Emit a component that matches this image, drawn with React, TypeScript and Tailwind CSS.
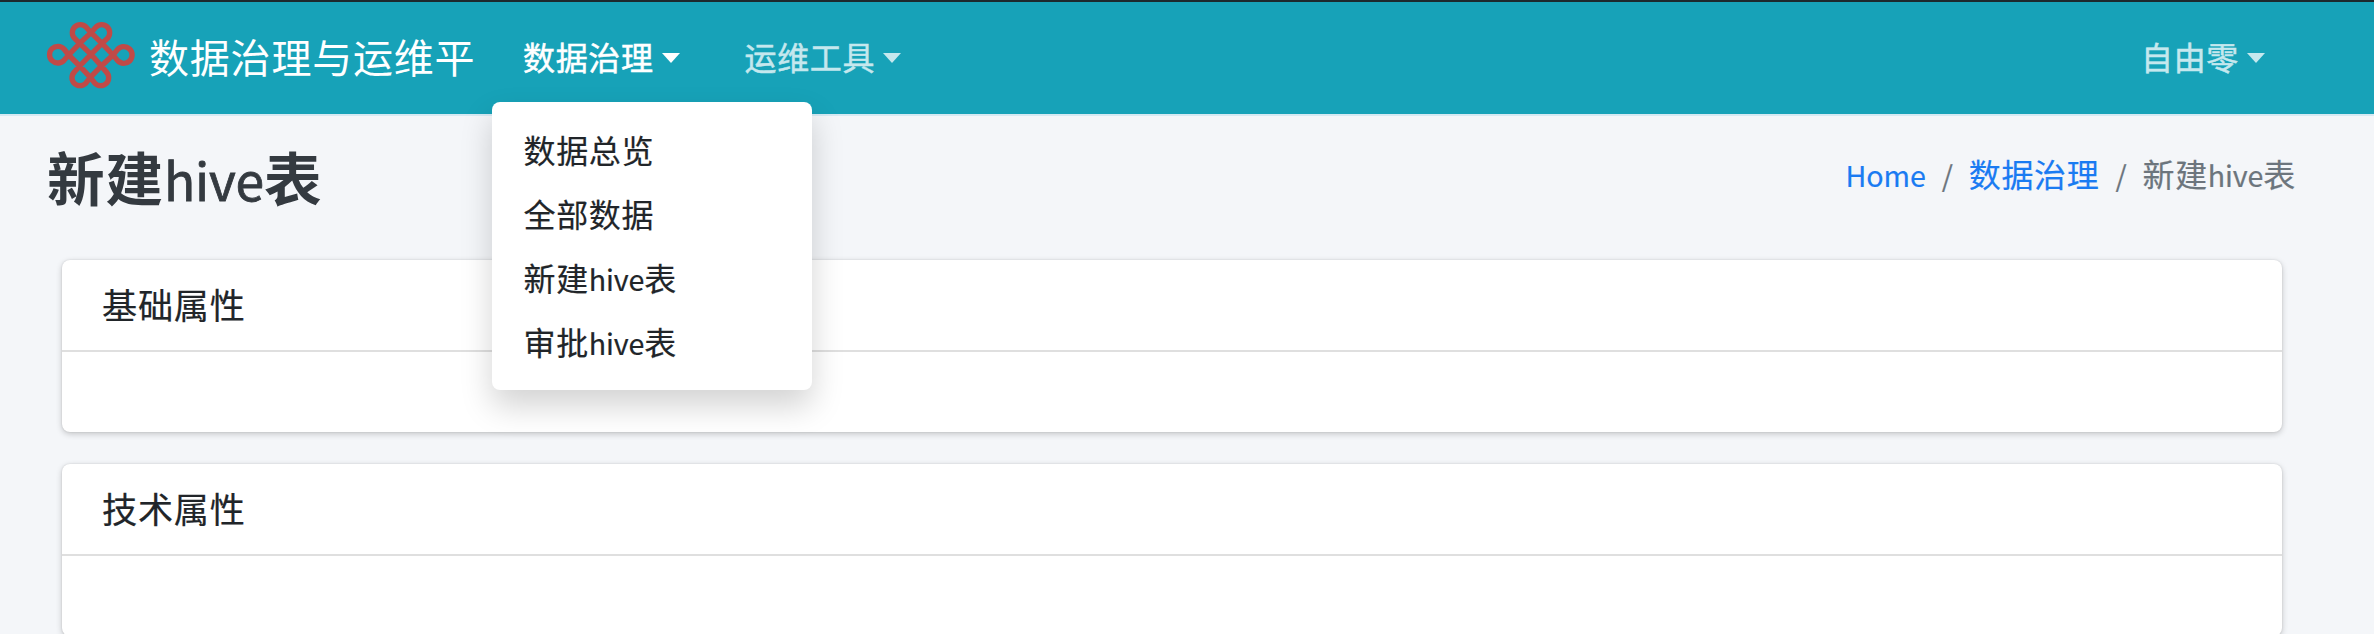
import type { ReactNode } from "react";

const font = "font-['Noto_Sans_CJK_SC',sans-serif]";

function Logo() {
  return (
    <svg
      className="mb-[6px] h-[74px] w-[96px] shrink-0"
      viewBox="40 54 288 222"
      fill="none"
      stroke="#c04a47"
      strokeWidth="16"
      strokeLinejoin="round"
    >
      <path d="M184 98L169 81A24 24 0 1 0 135 115L150 130L184 163L215 198L230 216A24 24 0 1 1 196 250L182 232L150 198L117 165L103 147A25 25 0 1 0 103 181L117 165L150 130L184 98L199 81A24 24 0 1 1 233 115L217 130L184 163L150 198L134 216A24 24 0 1 0 168 250L182 232L215 198L250 165L264 148A25 25 0 1 1 264 182L250 165L217 130Z" />
    </svg>
  );
}

function Caret() {
  return (
    <span className="ml-[8px] h-0 w-0 border-x-[9px] border-t-[10px] border-x-transparent border-t-current" />
  );
}

function Latin({ children }: { children: ReactNode }) {
  return <span className="text-[0.895em] font-normal tracking-[-0.003em]">{children}</span>;
}

function Card({ title }: { title: string }) {
  return (
    <section className="h-[172px] shrink-0 rounded-lg bg-white shadow-[0_0_2px_rgba(0,0,0,0.125),0_2px_6px_rgba(0,0,0,0.2)]">
      <h3 className="flex h-[92px] items-center border-b-2 border-[#dfdfdf] pb-[2px] pl-10 text-[35.2px] leading-[42px] tracking-[0.02em]">
        {title}
      </h3>
    </section>
  );
}

const menu: { zh: string; latin?: string; tail?: string }[] = [
  { zh: "数据总览" },
  { zh: "全部数据" },
  { zh: "新建", latin: "hive", tail: "表" },
  { zh: "审批", latin: "hive", tail: "表" },
];

export default function App() {
  return (
    <div
      className={`${font} flex h-[634px] w-[2374px] flex-col overflow-hidden bg-[#f4f6f9] text-[#212529] [-webkit-text-stroke:0.2px]`}
    >
      <header className="flex h-[116px] shrink-0 items-center border-t-2 border-b-2 border-t-[#1d292d] border-b-[#d5e9f2] bg-[#17a2b8] pl-[43px] text-[32px] leading-[48px]">
        <div className="flex items-center">
          <Logo />
          <span className="ml-[10px] w-[330px] pb-[5px] text-[40px] leading-[60px] tracking-[0.02em] whitespace-nowrap text-white [-webkit-text-stroke:0]">
            数据治理与运维平
          </span>
        </div>
        <nav className="ml-[44px] flex items-center tracking-[0.02em] text-[#c5e8ee]">
          <div className="relative flex items-center text-white">
            <span className="pb-[4px] [-webkit-text-stroke:0.5px]">数据治理</span>
            <Caret />
            <ul className="absolute top-[70px] -left-[31px] z-10 w-[320px] rounded-lg bg-white py-4 text-[#212529] shadow-[0_16px_32px_rgba(0,0,0,0.175)]">
              {menu.map((m) => (
                <li key={m.zh} className="h-16 pt-[7px] pl-[31.5px]">
                  {m.zh}
                  {m.latin && <Latin>{m.latin}</Latin>}
                  {m.tail}
                </li>
              ))}
            </ul>
          </div>
          <div className="ml-[65px] flex items-center">
            <span className="pb-[4px] [-webkit-text-stroke:0.5px]">运维工具</span>
            <Caret />
          </div>
        </nav>
        <div className="mr-[109px] ml-auto flex items-center tracking-[0.02em] text-[#c5e8ee]">
          <span className="pb-[4px] [-webkit-text-stroke:0.5px]">自由零</span>
          <Caret />
        </div>
      </header>
      <div className="flex h-[144px] shrink-0 items-start justify-between pr-[78px] pl-[47px]">
        <h1 className="mt-[26px] text-[57.6px] leading-[69px] font-bold tracking-[0.015em] text-[#343a40] [-webkit-text-stroke:0]">
          新建
          <span className="[-webkit-text-stroke:0.8px]">
            <Latin>hive</Latin>
          </span>
          表
        </h1>
        <ol className="mt-[33px] flex gap-4 text-[32px] leading-[48px] tracking-[0.02em] text-[#6c757d]">
          <li className="text-[#1a7bf2]">
            <Latin>Home</Latin>
          </li>
          <li>
            <Latin>/</Latin>
          </li>
          <li className="text-[#1a7bf2]">数据治理</li>
          <li>
            <Latin>/</Latin>
          </li>
          <li>
            新建<Latin>hive</Latin>表
          </li>
        </ol>
      </div>
      <main className="flex flex-col gap-8 pr-[92px] pl-[62px]">
        <Card title="基础属性" />
        <Card title="技术属性" />
      </main>
    </div>
  );
}
